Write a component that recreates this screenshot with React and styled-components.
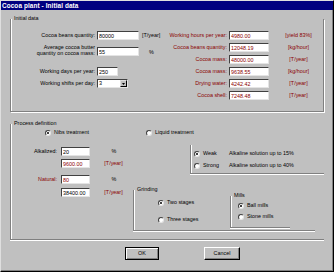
import React from "react";
import styled, { createGlobalStyle } from "styled-components";

const GlobalStyle = createGlobalStyle`
  html, body { margin: 0; padding: 0; background: #c0c0c0; }
  body { font-family: "Liberation Sans", Arial, sans-serif; }
  * { box-sizing: border-box; }
`;

const RED = "#8b0000";

const Window = styled.div`
  width: 334px;
  height: 272px;
  background: #c0c0c0;
  border-top: 1px solid #dfdfdf;
  border-left: 1px solid #dfdfdf;
  border-right: 1px solid #000;
  border-bottom: 1px solid #000;
  box-shadow: inset -1px -1px 0 #808080;
  display: flex;
  flex-direction: column;
  font-size: 5.4px;
  line-height: 7px;
  color: #000;
  overflow: hidden;
`;

const TitleBar = styled.div`
  height: 9px;
  background: #000080;
  color: #fff;
  font-weight: bold;
  font-size: 6.4px;
  letter-spacing: 0.1px;
  line-height: 9px;
  padding-left: 1px;
  white-space: nowrap;
`;

const Body = styled.div`
  padding: 0 9px;
  margin-top: 9px;
  display: flex;
  flex-direction: column;
`;

const Group = styled.div`
  flex-shrink: 0;
  height: ${(p) => p.$h}px;
  width: ${(p) => (p.$w ? `${p.$w}px` : "auto")};
  margin-top: ${(p) => p.$mt || 0}px;
  margin-left: ${(p) => p.$ml || 0}px;
  border-left: 1px solid #808080;
  border-bottom: 1px solid #808080;
  border-right: ${(p) => (p.$right ? "1px solid #808080" : "none")};
  box-shadow: inset 1px 0 0 #fff, ${(p) => (p.$right ? "1px 1px 0 #fff" : "0 1px 0 #fff")};
`;

const Legend = styled.div`
  margin: -4px 0 0 2px;
  padding: 0 1px;
  height: 7px;
  line-height: 7px;
  white-space: nowrap;
`;

const Columns = styled.div`
  display: flex;
  align-items: flex-start;
  margin-top: 9px;
`;

const Column = styled.div`
  width: ${(p) => (p.$w ? `${p.$w}px` : "auto")};
  flex: ${(p) => (p.$w ? "none" : "1")};
  display: flex;
  flex-direction: column;
  padding-top: ${(p) => p.$pt || 0}px;
`;

const FieldRow = styled.div`
  display: grid;
  grid-template-columns: ${(p) => p.$cols};
  align-items: ${(p) => p.$align || "center"};
  margin-top: ${(p) => p.$mt || 0}px;
  min-height: 9px;
`;

const Label = styled.div`
  text-align: right;
  padding-right: ${(p) => p.$pr ?? 2}px;
  color: ${(p) => p.$c || "#000"};
  white-space: nowrap;
  line-height: ${(p) => p.$lh || 7}px;
`;

const Unit = styled.div`
  padding-left: ${(p) => p.$pl || 3}px;
  color: ${(p) => p.$c || "#000"};
  white-space: nowrap;
`;

const Field = styled.input`
  width: ${(p) => p.$w}px;
  height: 9px;
  margin: 0;
  padding: 0 0 0 1px;
  border: 1px solid;
  border-color: #404040 #e4e4e4 #e4e4e4 #404040;
  background: #fff;
  font: inherit;
  color: ${(p) => p.$c || "#000"};
  outline: none;
`;

const Combo = styled.div`
  width: 31px;
  height: 9px;
  display: flex;
  background: #fff;
  border: 1px solid;
  border-color: #404040 #e4e4e4 #e4e4e4 #404040;
`;

const ComboText = styled.span`
  flex: 1;
  padding-left: 1px;
  line-height: 7px;
`;

const ComboButton = styled.span`
  width: 7px;
  height: 7px;
  background: #c0c0c0;
  border: 1px solid;
  border-color: #dfdfdf #000 #000 #dfdfdf;
  display: flex;
  align-items: center;
  justify-content: center;
`;

const TreatmentRow = styled.div`
  display: grid;
  grid-template-columns: 101px auto;
  margin-top: 2px;
  padding-left: 34px;
  height: 7px;
`;

const RadioItem = styled.div`
  display: flex;
  align-items: center;
  gap: 3px;
  height: 7px;
  white-space: nowrap;
  margin-top: ${(p) => p.$mt || 0}px;
`;

const RadioCircle = styled.span`
  width: 6px;
  height: 6px;
  flex: none;
  border-radius: 50%;
  background: #fff;
  border: 1px solid;
  border-color: #404040 #e4e4e4 #e4e4e4 #404040;
  display: flex;
  align-items: center;
  justify-content: center;
  &::after {
    content: "";
    width: 2px;
    height: 2px;
    border-radius: 50%;
    background: ${(p) => (p.$on ? "#000" : "transparent")};
  }
`;

const ProcessBody = styled.div`
  display: flex;
  align-items: flex-start;
  margin-top: 9px;
`;

const AlkContent = styled.div`
  padding: 5px 0 0 3px;
  display: flex;
  flex-direction: column;
`;

const AlkRow = styled.div`
  display: grid;
  grid-template-columns: 35px auto;
  height: 7px;
  align-items: center;
  margin-top: ${(p) => p.$mt || 0}px;
  white-space: nowrap;
`;

const GrindBody = styled.div`
  display: flex;
  align-items: flex-start;
`;

const RadioStack = styled.div`
  width: ${(p) => p.$w || "auto"};
  padding-left: ${(p) => p.$pl || 0}px;
  display: flex;
  flex-direction: column;
`;

const ButtonRow = styled.div`
  display: flex;
  gap: 45px;
  margin-top: 7px;
  padding-left: 115px;
`;

const Button = styled.button`
  width: ${(p) => p.$w}px;
  height: 13px;
  margin: 0;
  padding: 0;
  font: inherit;
  color: #000;
  background: #c0c0c0;
  border: 1px solid;
  border-color: ${(p) => (p.$default ? "#000" : "#fff #000 #000 #fff")};
  box-shadow: ${(p) =>
    p.$default ? "inset 1px 1px 0 #fff, inset -1px -1px 0 #808080" : "inset -1px -1px 0 #808080"};
`;

const Radio = ({ on, children, mt }) => (
  <RadioItem $mt={mt}>
    <RadioCircle $on={on} />
    <span>{children}</span>
  </RadioItem>
);

const LEFT = "86px auto auto";
const RIGHT = "69px auto auto";
const PROC = "50px auto auto";

const rightRows = [
  ["Working hours per year:", "4980.00", "[yield 83%]"],
  ["Cocoa beans quantity:", "12048.19", "[kg/hour]"],
  ["Cocoa mass:", "48000.00", "[T/year]"],
  ["Cocoa mass:", "9638.55", "[kg/hour]"],
  ["Drying water:", "4242.42", "[T/year]"],
  ["Cocoa shell:", "7248.48", "[T/year]"],
];

export default function App() {
  return (
    <>
      <GlobalStyle />
      <Window>
        <TitleBar>Cocoa plant - Initial data</TitleBar>
        <Body>
          <Group $h={93} $right>
            <Legend>Initial data</Legend>
            <Columns>
              <Column $w={149}>
                <FieldRow $cols={LEFT}>
                  <Label>Cocoa beans quantity:</Label>
                  <Field $w={42} readOnly value="80000" />
                  <Unit $pl={3}>[T/year]</Unit>
                </FieldRow>
                <FieldRow $cols={LEFT} $mt={4} $align="end">
                  <Label $lh={6}>
                    Average cocoa butter
                    <br />
                    quantity on cocoa mass:
                  </Label>
                  <Field $w={42} readOnly value="55" />
                  <Unit $pl={4}>%</Unit>
                </FieldRow>
                <FieldRow $cols={LEFT} $mt={11}>
                  <Label>Working days per year:</Label>
                  <Field $w={21} readOnly value="250" />
                  <span />
                </FieldRow>
                <FieldRow $cols={LEFT} $mt={3}>
                  <Label>Working shifts per day:</Label>
                  <Combo>
                    <ComboText>3</ComboText>
                    <ComboButton>
                      <svg width="3" height="2" viewBox="0 0 3 2">
                        <polygon points="0,0 3,0 1.5,2" fill="#000" />
                      </svg>
                    </ComboButton>
                  </Combo>
                  <span />
                </FieldRow>
              </Column>
              <Column>
                {rightRows.map(([l, v, u], i) => (
                  <FieldRow key={i} $cols={RIGHT} $mt={i ? 3 : 0}>
                    <Label $c={RED}>{l}</Label>
                    <Field $w={40} $c={RED} readOnly value={v} />
                    <Unit $pl={5} $c={RED}>
                      {u}
                    </Unit>
                  </FieldRow>
                ))}
              </Column>
            </Columns>
          </Group>

          <Group $h={116} $mt={12}>
            <Legend>Process definition</Legend>
            <TreatmentRow>
              <Radio on>Nibs treatment</Radio>
              <Radio>Liquid treatment</Radio>
            </TreatmentRow>
            <ProcessBody>
              <Column $w={122} $pt={2}>
                <FieldRow $cols={PROC}>
                  <Label $pr={4}>Alkalized:</Label>
                  <Field $w={29} readOnly value="20" />
                  <Unit $pl={5}>%</Unit>
                </FieldRow>
                <FieldRow $cols={PROC} $mt={3}>
                  <span />
                  <Field $w={29} $c={RED} readOnly value="9600.00" />
                  <Unit $pl={4} $c={RED}>
                    [T/year]
                  </Unit>
                </FieldRow>
                <FieldRow $cols={PROC} $mt={7}>
                  <Label $pr={4} $c={RED}>
                    Natural:
                  </Label>
                  <Field $w={29} $c={RED} readOnly value="80" />
                  <Unit $pl={5}>%</Unit>
                </FieldRow>
                <FieldRow $cols={PROC} $mt={4}>
                  <span />
                  <Field $w={29} readOnly value="38400.00" />
                  <Unit $pl={4} $c={RED}>
                    [T/year]
                  </Unit>
                </FieldRow>
              </Column>
              <Column>
                <Group $h={29} $ml={57}>
                  <AlkContent>
                    <AlkRow>
                      <Radio on>Weak</Radio>
                      <span>Alkaline solution up to 15%</span>
                    </AlkRow>
                    <AlkRow $mt={5}>
                      <Radio>Strong</Radio>
                      <span>Alkaline solution up to 40%</span>
                    </AlkRow>
                  </AlkContent>
                </Group>
                <Group $h={41} $w={182} $mt={16}>
                  <Legend>Grinding</Legend>
                  <GrindBody>
                    <RadioStack $w="96px" $pl={24}>
                      <Radio on mt={6}>
                        Two stages
                      </Radio>
                      <Radio mt={10}>Three stages</Radio>
                    </RadioStack>
                    <Group $h={32} $w={60} $mt={3}>
                      <Legend>Mills</Legend>
                      <RadioStack $pl={7}>
                        <Radio on mt={3}>
                          Ball mills
                        </Radio>
                        <Radio mt={4}>Stone mills</Radio>
                      </RadioStack>
                    </Group>
                  </GrindBody>
                </Group>
              </Column>
            </ProcessBody>
          </Group>

          <ButtonRow>
            <Button $w={34} $default>
              OK
            </Button>
            <Button $w={36}>Cancel</Button>
          </ButtonRow>
        </Body>
      </Window>
    </>
  );
}
